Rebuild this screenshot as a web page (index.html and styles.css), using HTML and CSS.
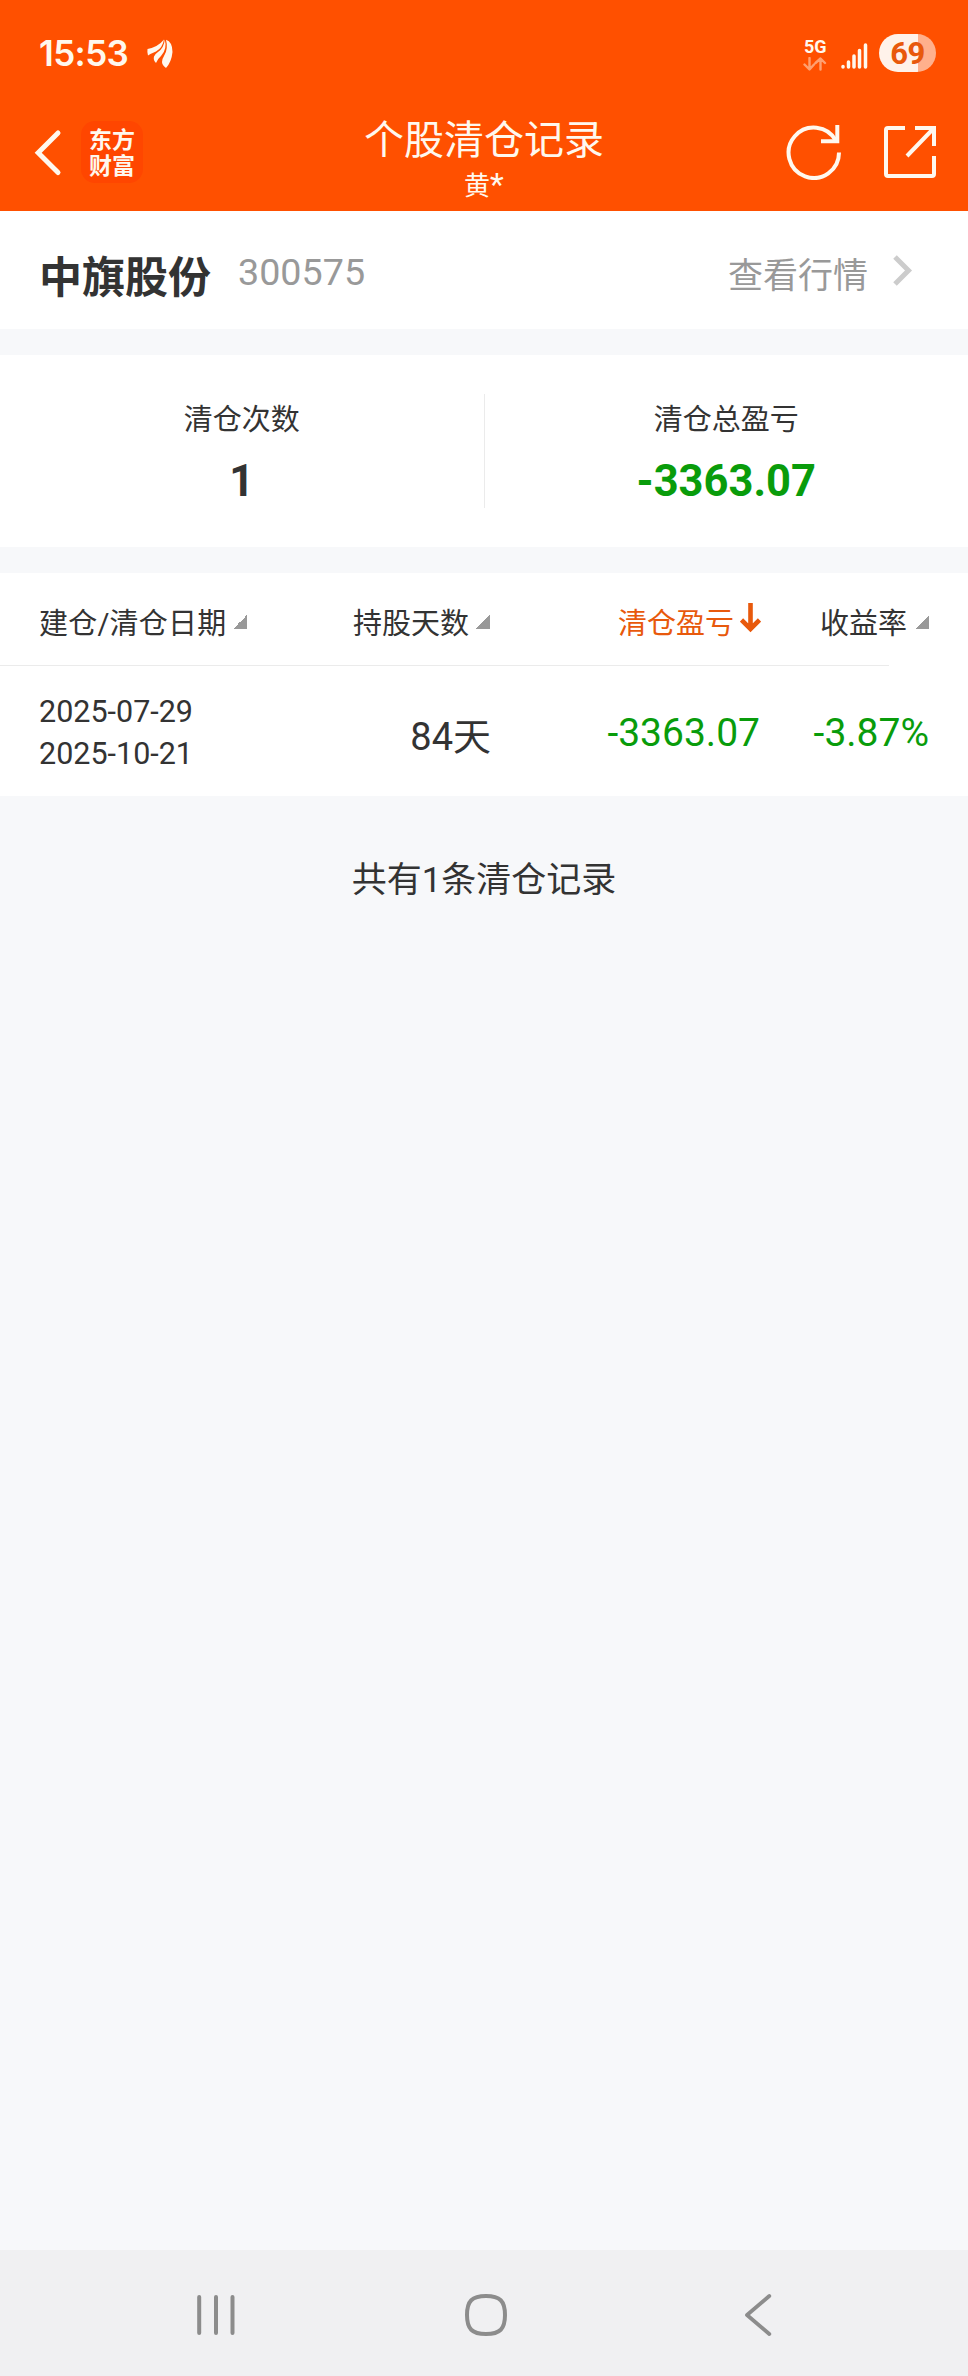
FILE: index.html
```html
<!DOCTYPE html>
<html lang="zh-CN">
<head>
<meta charset="utf-8">
<title>个股清仓记录</title>
<link rel="stylesheet" href="styles.css">
</head>
<body>
<div class="app">
  <header class="top">
    <div class="status">
      <span class="clock">15:53</span>
      <svg class="brand" width="26" height="29" viewBox="0 0 26 29" fill="#fff8ee">
        <path d="M.5 10Q11 8 17 .5Q15.500 9 9 12.500Q4 14.500 1 16.500Q0 13 .5 10Z"/>
        <path d="M17.800 .5Q20.500 10 14 17Q10.500 20 9 24Q6 21 7 17.500Q8 15 11 13Q17 9 17.800 .5Z"/>
        <path d="M19 .8Q25.500 3 25.500 13Q24.500 23 19 29Q15 26 15 23Q15 20 17 17Q21.500 10 19 .8Z"/>
      </svg>
      <div class="net">
        <span class="net-label">5G</span>
        <svg width="24" height="14" viewBox="0 0 24 14" fill="none" stroke="#ffa070" stroke-width="2.400" stroke-linecap="round" stroke-linejoin="round">
          <path d="M6.500 1V12M1.500 7.500L6.500 12.500L11 7.500M17.500 12.500V2M12.500 6L17.500 1.500L22 6"/>
        </svg>
      </div>
      <svg class="signal" width="27" height="26" viewBox="0 0 27 26" stroke="#fff8ee" stroke-width="3.500" stroke-linecap="round">
        <path d="M2 23.500V24M7.500 19V24M13 13V24M18.500 7.500V24M24.500 2V24"/>
      </svg>
      <span class="battery">69</span>
    </div>
    <div class="titlebar">
      <div class="side">
        <svg class="back" width="28" height="48" viewBox="0 0 28 48" fill="none" stroke="#fff8ee" stroke-width="5" stroke-linecap="round" stroke-linejoin="miter">
          <path d="M24 4L4.200 23.800L24 43.500"/>
        </svg>
        <div class="logo">东方<br>财富</div>
      </div>
      <div class="heading">
        <h1>个股清仓记录</h1>
        <p>黄<span class="star">*</span></p>
      </div>
      <div class="side actions">
        <svg width="56" height="56" viewBox="0 0 56 56" fill="none" stroke="#fff8ee" stroke-width="4">
          <path d="M53 28.500A25.200 25.200 0 1 1 50 16.800"/>
          <path d="M51.300 1V17.300H35"/>
        </svg>
        <svg class="share" width="54" height="54" viewBox="0 0 54 54" fill="none" stroke="#fff8ee" stroke-width="4">
          <path d="M22 3H5Q3 3 3 5V49Q3 51 5 51H49Q51 51 51 49V31"/>
          <path d="M32 3H51V21M51 3L24 31"/>
        </svg>
      </div>
    </div>
  </header>

  <section class="stock">
    <strong class="stock-name">中旗股份</strong>
    <span class="stock-code">300575</span>
    <a class="quote">查看行情</a>
    <svg class="chev" width="20" height="31" viewBox="0 0 20 31" fill="none" stroke="#ccc" stroke-width="5"><path d="M2 2L15.500 15.500L2 29"/></svg>
  </section>

  <section class="stats">
    <div class="stat"><span>清仓次数</span><b>1</b></div>
    <div class="divider"></div>
    <div class="stat"><span>清仓总盈亏</span><b class="loss">-3363.07</b></div>
  </section>

  <section class="table">
    <div class="row head">
      <span class="first">建仓/清仓日期<i class="tri"></i></span>
      <span class="num">持股天数<i class="tri"></i></span>
      <span class="num active">清仓盈亏<svg class="down" width="21" height="30" viewBox="0 0 21 30" fill="none" stroke="#e8590c" stroke-width="4.600"><path d="M10.500 0V26M1.500 17L10.500 26L19.500 17"/></svg></span>
      <span class="num">收益率<i class="tri wide"></i></span>
    </div>
    <div class="rule"></div>
    <div class="row body">
      <span class="dates">2025-07-29<br>2025-10-21</span>
      <span class="num days">84天</span>
      <span class="num loss">-3363.07</span>
      <span class="num loss">-3.87%</span>
    </div>
  </section>

  <p class="total">共有1条清仓记录</p>

  <nav class="nav">
    <svg width="40" height="44" viewBox="0 0 40 44" stroke="#8c8c8c" stroke-width="4" stroke-linecap="round"><path d="M3.200 4V40M20 4V40M36.500 4V40"/></svg>
    <svg class="home" width="44" height="44" viewBox="0 0 44 44" fill="none" stroke="#8c8c8c" stroke-width="4"><path d="M22 3C36 3 41 8 41 22S36 41 22 41S3 36 3 22S8 3 22 3Z"/></svg>
    <svg width="28" height="44" viewBox="0 0 28 44" fill="none" stroke="#8c8c8c" stroke-width="3.800" stroke-linecap="round" stroke-linejoin="round"><path d="M25.300 3L3 22L25.300 41"/></svg>
  </nav>
</div>
</body>
</html>
```
FILE: styles.css
```css
* { box-sizing: border-box; margin: 0; padding: 0; }
body {
  background: #f7f8fa;
  color: #333;
  font-family: Roboto, "Noto Sans CJK SC", sans-serif;
}
svg { display: block; flex: none; }
.app { display: flex; flex-direction: column; width: 968px; height: 2376px; }

.top { height: 211px; background: #ff5000; color: #fff8ee; }
.status { display: flex; align-items: flex-start; height: 106px; padding: 34px 32px 0 39px; }
.clock { width: 92px; font: 600 35px/39px Inter, sans-serif; letter-spacing: -0.600px; white-space: nowrap; }
.brand { margin: 5px 0 0 16px; }
.net { display: flex; flex-direction: column; width: 24px; margin: 4px 14px 0 auto; }
.net-label { font: 700 18px/18px Roboto, sans-serif; margin-bottom: 1px; padding-left: 1px; }
.signal { margin: 9px 11px 0 0; }
.battery {
  width: 57px; height: 38px; border-radius: 19px;
  background: linear-gradient(90deg, #fff2ea 39px, #ffb08c 39px);
  color: #e8590c; font: 700 31px/39px Roboto, sans-serif; text-align: center; letter-spacing: -0.500px;
}
.titlebar { display: flex; height: 105px; }
.side { display: flex; width: 230px; padding: 15px 0 0 34px; }
.back { margin-top: 8px; }
.logo {
  width: 62px; height: 62px; margin-left: 19px; padding-top: 4px; border-radius: 14px; background: #ff4600;
  font: 700 23px/26px "Noto Sans CJK SC", sans-serif; text-align: center;
}
.heading { flex: 1; padding-top: 10px; text-align: center; }
h1 { font-size: 40px; line-height: 50px; font-weight: 400; }
.heading p { font-size: 26px; line-height: 40px; }
.star { font-size: 32px; line-height: 30px; }
.actions { gap: 41px; padding: 18px 31px 0 0; justify-content: flex-end; }
.share { margin-top: 1px; }

.stock { display: flex; align-items: center; height: 118px; padding: 0 55px 0 39px; background: #fff; }
.stock-name { width: 198px; font-size: 43px; line-height: 50px; padding-top: 15px; height: 65px; }
.stock-code { margin-left: 1px; font-size: 37.700px; line-height: 40px; color: #999; padding-top: 4px; }
.quote { margin-left: auto; font-size: 35px; line-height: 40px; color: #999; padding-top: 14px; }
.chev { margin-left: 25px; }

.stats { display: flex; height: 192px; margin-top: 26px; padding-top: 39px; background: #fff; }
.stat { flex: 1; display: flex; flex-direction: column; align-items: center; padding-top: 6px; }
.stat span { font-size: 29px; line-height: 40px; }
.stat b { font-size: 43.500px; line-height: 50px; margin-top: 17px; }
.divider { width: 1px; height: 114px; background: #ebebeb; }
.loss { color: #099c0b; }

.table { height: 223px; margin-top: 26px; background: #fff; }
.row { display: grid; grid-template-columns: 251px 200px 270px 169px; padding-left: 39px; }
.head { height: 92px; font-size: 29px; line-height: 103px; }
.head span { display: flex; white-space: nowrap; }
.first { letter-spacing: 0.200px; }
.num { justify-content: flex-end; text-align: right; }
.tri { width: 14px; height: 14px; margin: 42px 0 0 7px; background: linear-gradient(135deg, transparent 50%, #999 50%); }
.wide { margin-left: 8px; }
.active { color: #e8590c; }
.down { margin: 30px -1px 0 6px; }
.rule { width: 889px; height: 1px; background: #ebebeb; }
.body { font-size: 39px; line-height: 135px; }
.dates { padding-top: 25px; font-size: 30.500px; line-height: 42px; }
.days { margin-right: -1px; font-size: 38px; line-height: 142px; }

.total { padding-top: 65px; text-align: center; font-size: 35px; line-height: 40px; }

.nav {
  display: flex; align-items: flex-start; justify-content: space-between;
  height: 126px; margin-top: auto; padding: 43px 196px 0; background: #f0f0f2;
}
.home { margin-right: 9px; }
```
